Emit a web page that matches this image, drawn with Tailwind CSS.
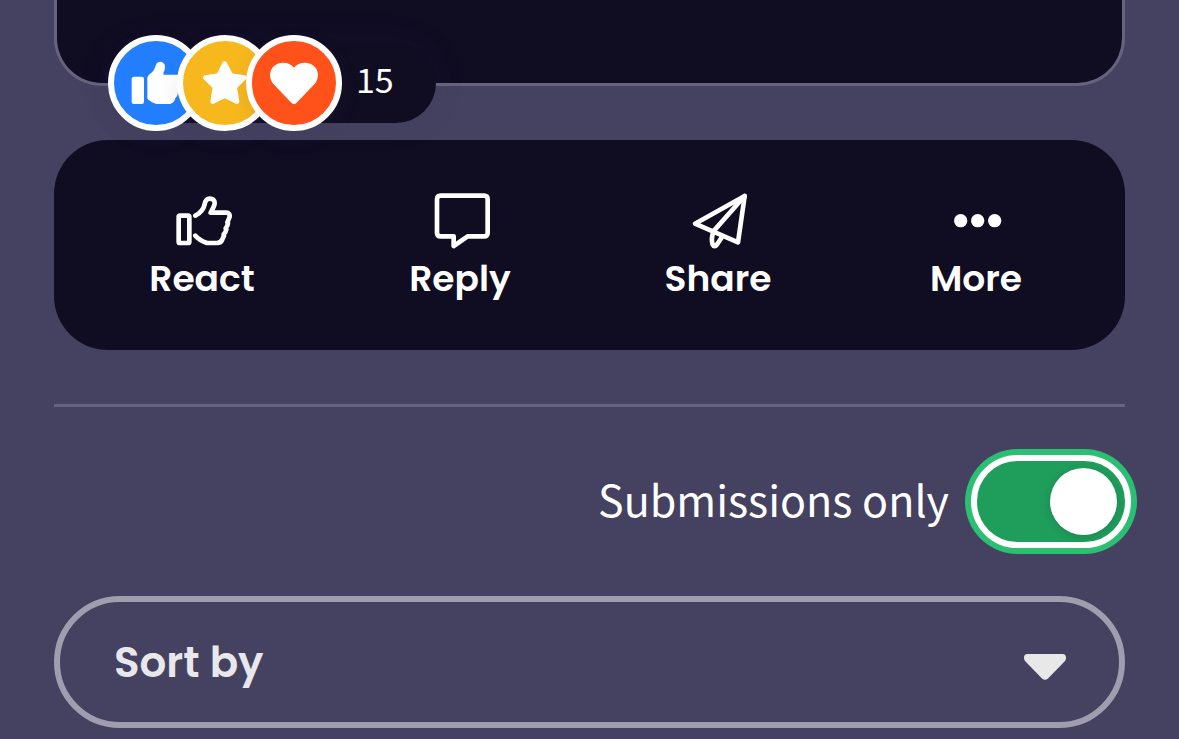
<!DOCTYPE html>
<html lang="en">
<head>
  <meta charset="UTF-8">
  <meta name="viewport" content="width=device-width, initial-scale=1.0">
  <title>Submissions</title>
  <script src="https://cdn.jsdelivr.net/npm/@tailwindcss/browser@4"></script>
</head>
<body class="bg-[#454160] min-h-screen text-white font-['Noto_Sans_CJK_SC',sans-serif]">
  <main class="px-[54px] pb-3">

    <!-- Post card -->
    <article class="relative h-[86px] rounded-b-[48px] border-x-3 border-b-3 border-[#67637f] bg-[#100d23]">
      <a href="#reactions" class="absolute left-[51px] top-[35px] flex items-center h-24">
        <span class="absolute inset-x-0 top-2 bottom-2 rounded-full bg-[#100d23] shadow-[0_0_40px_rgba(62,63,94,0.06)]"></span>
        <span class="relative size-24 rounded-full border-6 border-white bg-[#237fff] shadow-[0_8px_20px_rgba(62,63,94,0.1)]">
          <svg viewBox="0 0 252 252" class="size-full" fill="#fff" aria-label="Like">
            <rect x="53" y="107" width="37" height="82" rx="7"/>
            <path d="M100 113C100 103 108 100 114 94C122 86 123 78 126 71C132 58 151 60 153 76C154 86 148 93 148 101H188C200 101 204 111 199 119C203 126 201 133 196 138C198 145 196 151 191 155C192 162 189 167 184 171C182 182 176 189 164 189H133C119 189 111 181 104 177C101 175 100 172 100 168Z"/>
          </svg>
        </span>
        <span class="relative -ml-[27px] size-24 rounded-full border-6 border-white bg-[#f7b81e] shadow-[0_8px_20px_rgba(62,63,94,0.1)]">
          <svg viewBox="0 0 252 252" class="size-full" fill="#fff" stroke="#fff" stroke-width="14" stroke-linejoin="round" aria-label="Star">
            <path d="M125 68L144 104L184 110L155 138L162 182L125 164L89 182L96 138L67 110L107 104Z"/>
          </svg>
        </span>
        <span class="relative -ml-[27px] size-24 rounded-full border-6 border-white bg-[#ff521a] shadow-[0_8px_20px_rgba(62,63,94,0.1)]">
          <svg viewBox="0 0 252 252" class="size-full" fill="#fff" aria-label="Love">
            <path d="M126 80C141 60 174 61 189 78C202 93 200 116 187 130L134 185Q126 193 118 185L65 130C52 116 50 93 63 78C78 61 111 60 126 80Z"/>
          </svg>
        </span>
        <span class="relative pl-[14px] pr-[42px] pb-2 text-[34px] leading-[50px]">15</span>
      </a>
    </article>

    <!-- Post actions -->
    <div class="mt-[54px] grid grid-cols-4 rounded-[54px] bg-[#100d23] pl-[19px] pr-5 pt-[50px] pb-11 font-['Poppins','Inter',sans-serif] font-semibold text-[36px] leading-[54px]">
      <button type="button" class="flex flex-col items-center gap-[2px]">
        <svg viewBox="0 0 180 180" class="size-[60px]" fill="none" stroke="#fff" stroke-width="14" stroke-linecap="round" stroke-linejoin="round">
          <rect x="20" y="77" width="32" height="82" rx="4"/>
          <path d="M70 77C86 69 95 57 98 43C100 31 105 26 113 26C125 26 130 34 127 45C124 55 119 60 116 68H162C171 68 175 74 172 83L166 97L168 99C168 106 165 110 161 115L163 118C162 125 159 129 155 133L156 137C154 141 153 144 151 148C148 156 143 159 134 159H105C92 154 80 149 70 137"/>
        </svg>
        React
      </button>
      <button type="button" class="flex flex-col items-center gap-[2px]">
        <svg viewBox="0 0 180 180" class="size-[60px]" fill="none" stroke="#fff" stroke-width="14" stroke-linejoin="round">
          <path d="M32 17H162Q173 17 173 28V128Q173 139 162 139H113L71 168V139H32Q21 139 21 128V28Q21 17 32 17Z"/>
        </svg>
        Reply
      </button>
      <button type="button" class="flex flex-col items-center gap-[2px]">
        <svg viewBox="0 0 180 180" class="size-[60px]" fill="none" stroke="#fff" stroke-width="14" stroke-linecap="round" stroke-linejoin="round">
          <path d="M170 18L21 101L150 157Z"/>
          <path d="M170 18L76 124C71 140 71 155 74 164C77 170 82 170 86 165L102 141"/>
        </svg>
        Share
      </button>
      <button type="button" class="flex flex-col items-center gap-[2px]">
        <svg viewBox="0 0 180 180" class="size-[60px]" fill="#fff">
          <circle cx="44" cy="92" r="20"/>
          <circle cx="95" cy="92" r="20"/>
          <circle cx="146" cy="92" r="20"/>
        </svg>
        More
      </button>
    </div>

    <hr class="mt-[54px] border-t-3 border-[#67637f]">

    <!-- Filters -->
    <div class="mt-12 -mr-[6px] flex items-center justify-end gap-[22px]">
      <label for="submissions" class="pb-2 text-[43px] leading-[64px]">Submissions only</label>
      <input type="checkbox" id="submissions" checked class="appearance-none flex shrink-0 items-center justify-start checked:justify-end w-40 h-[93px] px-2 rounded-full border-6 border-white bg-[#1f9d5b] ring-6 ring-[#2bbf73] before:content-[''] before:size-[67px] before:rounded-full before:bg-white before:shadow-[0_2px_8px_rgba(0,0,0,0.15)]">
    </div>

    <div class="relative mt-12">
      <select aria-label="Sort by" class="block appearance-none w-full h-[132px] rounded-full border-6 border-[#a09daf] bg-transparent px-[54px] font-['Poppins','Inter',sans-serif] font-semibold text-[42px] text-[#e8e8ec]">
        <option>Sort by</option>
      </select>
      <svg viewBox="0 0 44 28" class="pointer-events-none absolute right-[58px] top-[57px] w-11 h-7" fill="#e8e8e8">
        <path d="M4 1H40C43 1 44 5 42 8L25 25.500Q22 28 19 25.500L2 8C0 5 1 1 4 1Z"/>
      </svg>
    </div>

  </main>
</body>
</html>
